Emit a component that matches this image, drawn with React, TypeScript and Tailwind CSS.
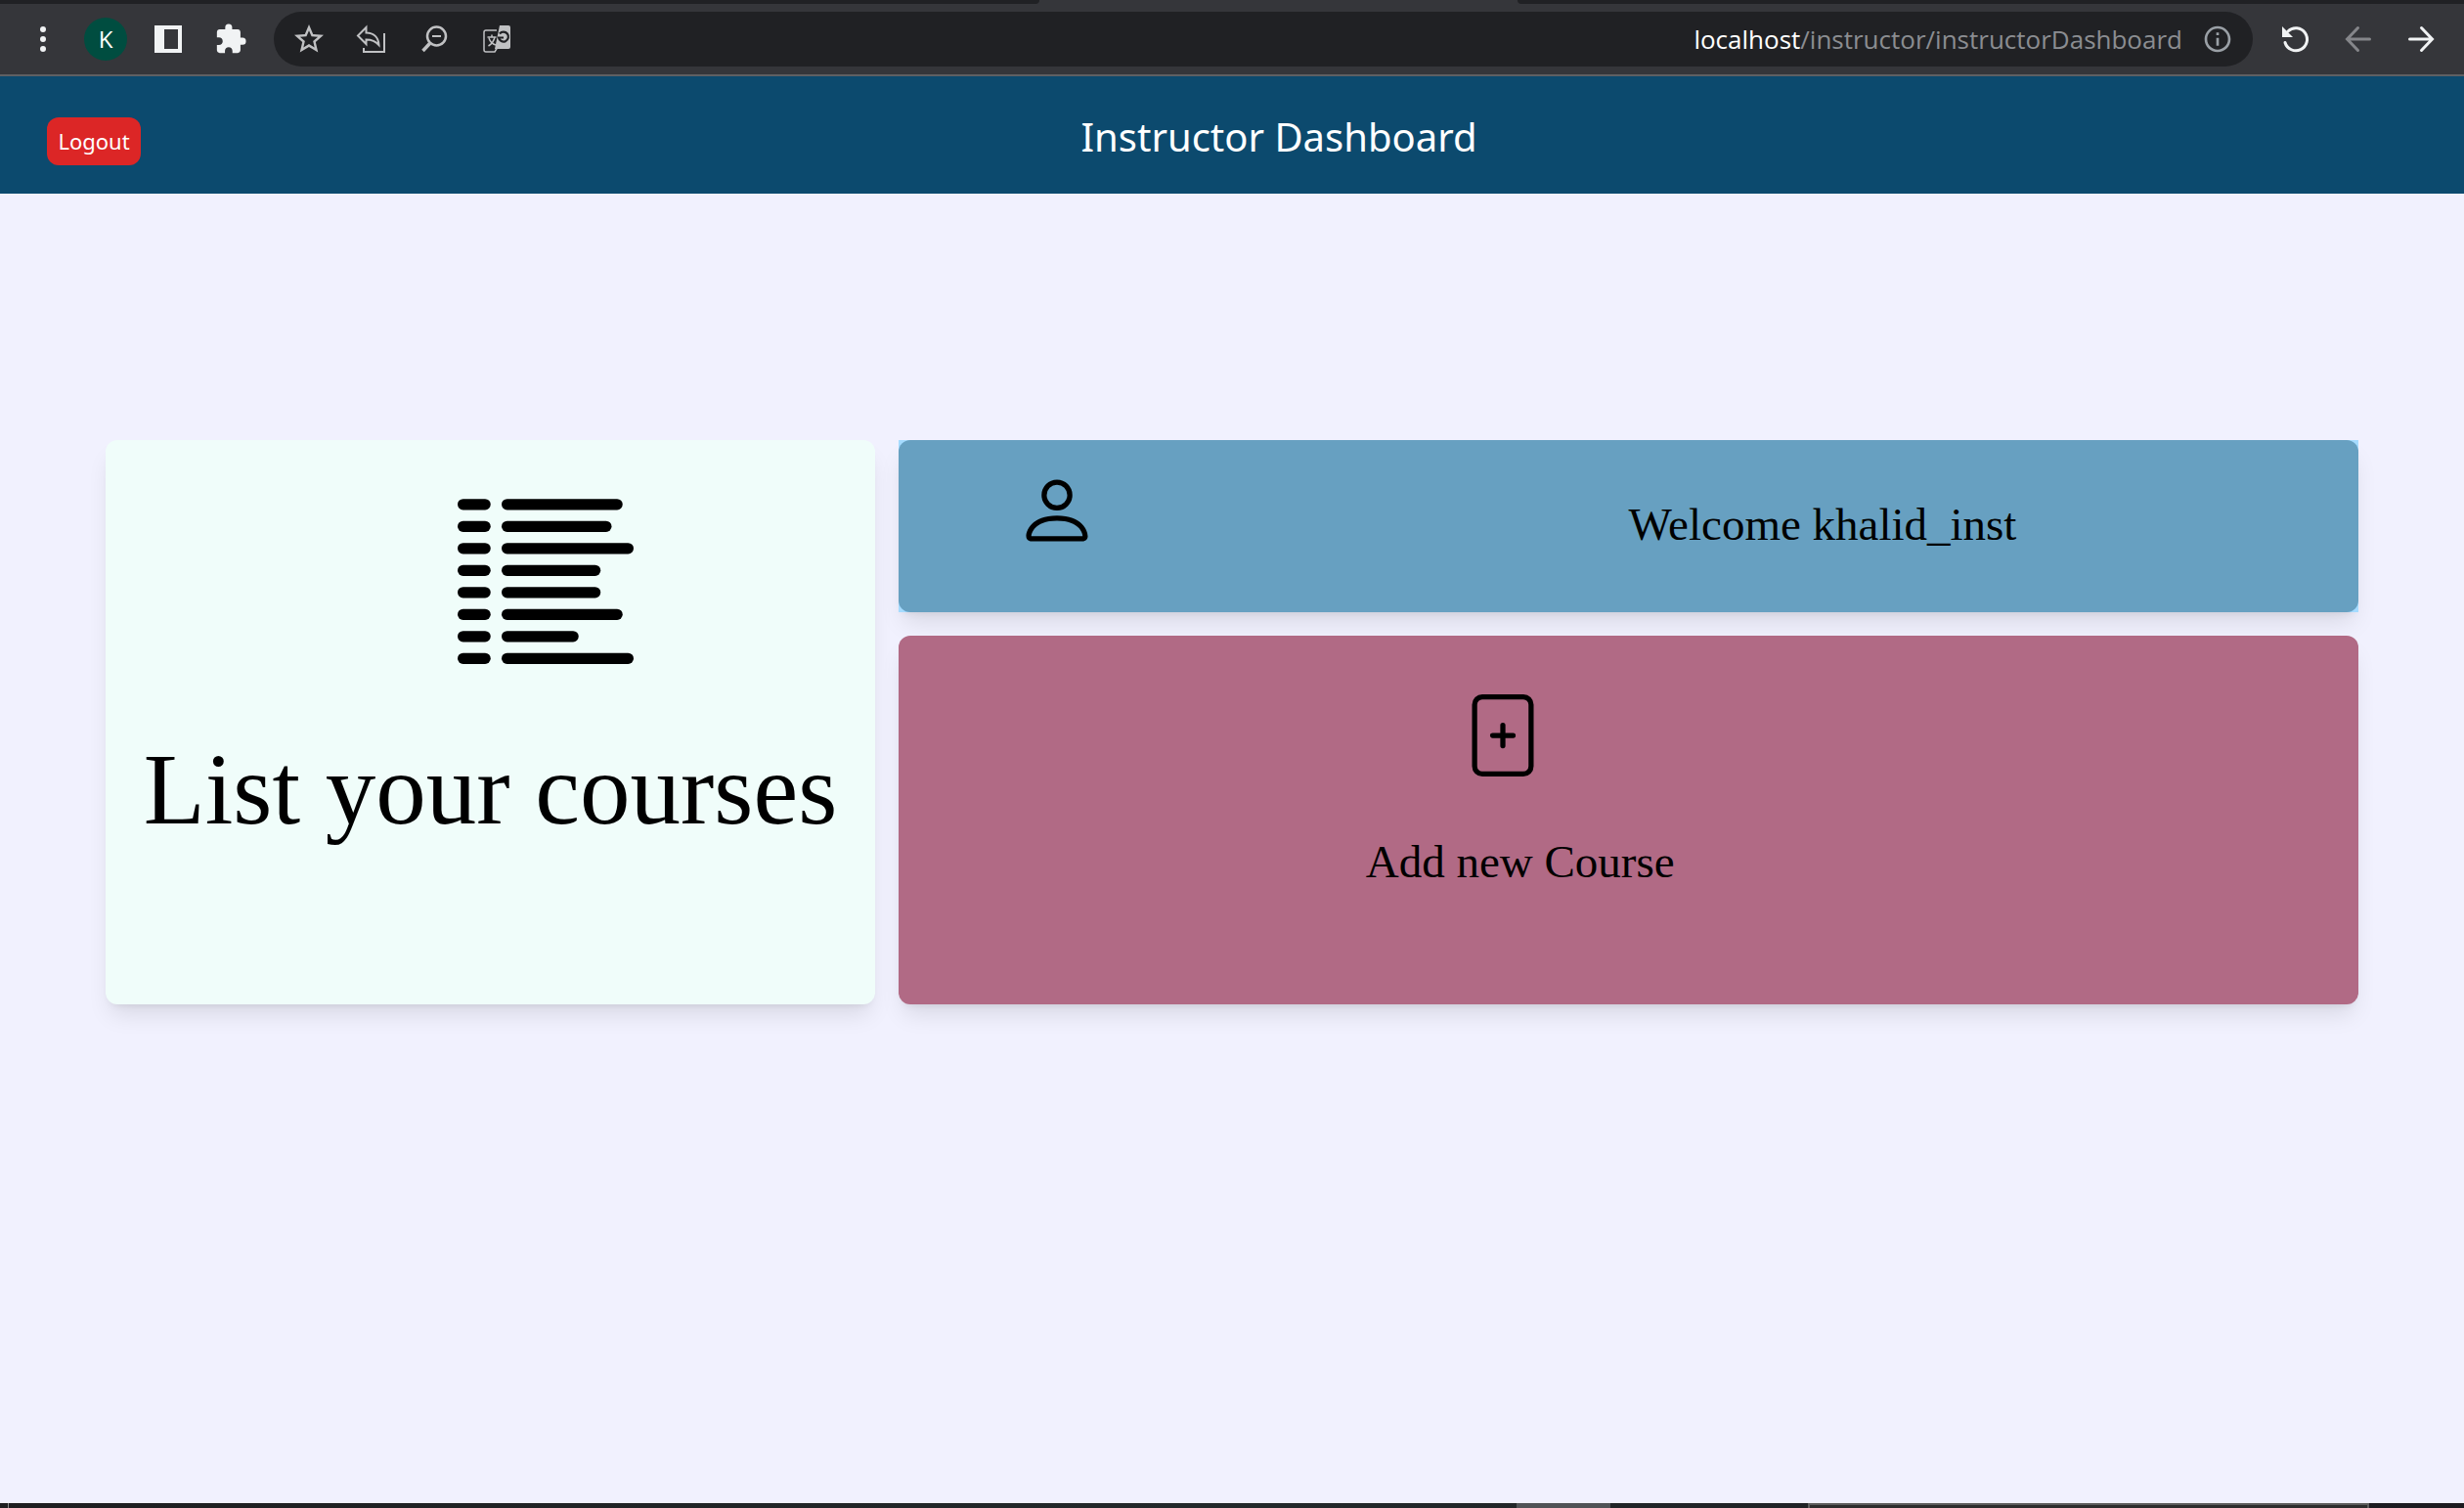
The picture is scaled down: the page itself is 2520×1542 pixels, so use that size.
import type { ReactNode } from "react";
import { BsFilePlus, BsPerson } from "react-icons/bs";
import { MdExtension, MdInfoOutline, MdStarOutline } from "react-icons/md";

const LIST_BARS = [15, 14, 16, 13, 13, 15, 11, 16];

function ListIcon() {
  return (
    <svg viewBox="0 0 16 15" className="h-[169px] w-[180px]" aria-hidden="true">
      {LIST_BARS.map((end, i) => (
        <g key={i}>
          <rect x="0" y={i * 2} width="3" height="1" rx="0.5" />
          <rect x="4" y={i * 2} width={end - 4} height="1" rx="0.5" />
        </g>
      ))}
    </svg>
  );
}

function IconButton({ label, children }: { label: string; children: ReactNode }) {
  return (
    <button type="button" aria-label={label} className="flex h-11 w-11 items-center justify-center rounded-full">
      {children}
    </button>
  );
}

function BrowserBar() {
  return (
    <div className="bg-[#35363a]">
      <div className="flex h-1 justify-between">
        <div className="w-[42.2%] rounded-br-lg bg-[#202124]" />
        <div className="w-[38.4%] rounded-bl-lg bg-[#202124]" />
      </div>
      <div className="flex h-[74px] items-center gap-5 border-b-2 border-[#5f6063] px-[22px] text-[#f1f3f4]">
        <IconButton label="Menu">
          <svg viewBox="0 0 36 36" className="size-9" fill="currentColor">
            <circle cx="18" cy="8" r="3" />
            <circle cx="18" cy="18" r="3" />
            <circle cx="18" cy="28" r="3" />
          </svg>
        </IconButton>
        <button type="button" aria-label="Profile" className="flex size-11 items-center justify-center rounded-full bg-[#004d40] font-['Open_Sans',sans-serif] text-2xl text-white">
          K
        </button>
        <IconButton label="Side panel">
          <svg viewBox="0 0 28 28" className="size-7" fill="currentColor">
            <path fillRule="evenodd" d="M0 0h28v28H0zM10 4v20h14V4z" />
          </svg>
        </IconButton>
        <IconButton label="Extensions">
          <MdExtension className="size-[34px]" />
        </IconButton>
        <div className="ml-[2px] flex h-14 flex-1 items-center rounded-full bg-[#202124] pl-[14px] pr-5 text-[#c0c1c3]">
          <div className="flex flex-1 gap-5">
            <IconButton label="Bookmark">
              <MdStarOutline className="size-9" />
            </IconButton>
            <IconButton label="Share">
              <svg viewBox="0 0 32 32" className="size-8" fill="none" stroke="currentColor" strokeWidth="2">
                <path d="M10.500 4v5.500C18 9.500 23 14 23.500 22C20 18 16 16.500 10.500 16.500V21L2 12.500z" />
                <path d="M29 10v19H8v-4" />
              </svg>
            </IconButton>
            <IconButton label="Zoom">
              <svg viewBox="0 0 32 32" className="size-8" fill="none" stroke="currentColor" strokeWidth="2.500">
                <circle cx="18.500" cy="13" r="9.500" />
                <path d="M14 13h9" strokeWidth="2" />
                <path d="M11.500 20.500L4.500 28" strokeWidth="3.500" />
              </svg>
            </IconButton>
            <IconButton label="Translate">
              <svg viewBox="0 0 32 32" className="size-8" fill="none" stroke="currentColor" strokeWidth="1.500">
                <path d="M16 7H5a2 2 0 0 0-2 2v18a2 2 0 0 0 2 2h9l3-5" />
                <path d="M6.500 14h9M11 11.500V14M14 14c-1 4-3 7-6.500 9M8 15c1 3 3.500 6 7 7" />
                <path fill="currentColor" stroke="none" d="M19 2h9a2 2 0 0 1 2 2v20a2 2 0 0 1-2 2H14z" />
                <path stroke="#202124" strokeWidth="2.200" d="M19 10.500A5 5 0 1 1 18 14.500h5" />
              </svg>
            </IconButton>
          </div>
          <p className="mr-5 font-['Open_Sans',sans-serif] text-[26px] leading-9 text-[#8b8d91]">
            <span className="text-white">localhost</span>/instructor/instructorDashboard
          </p>
          <MdInfoOutline className="size-8 text-[#9aa0a6]" />
        </div>
        <div className="ml-[2px] flex gap-5">
          <IconButton label="Reload">
            <svg viewBox="0 0 32 32" className="size-8" fill="none" stroke="currentColor" strokeWidth="3" strokeLinecap="round">
              <path d="M8 8a11.500 11.500 0 1 1-3 11.500" />
              <path fill="currentColor" stroke="none" d="M2 3v11h11z" />
            </svg>
          </IconButton>
          <IconButton label="Forward">
            <svg viewBox="0 0 32 32" className="size-8 text-[#85868a]" fill="none" stroke="currentColor" strokeWidth="3" strokeLinecap="round">
              <path d="M27.500 16H5M15.500 4.500L4.500 16l11 11.500" />
            </svg>
          </IconButton>
          <IconButton label="Back">
            <svg viewBox="0 0 32 32" className="size-8" fill="none" stroke="currentColor" strokeWidth="3" strokeLinecap="round">
              <path d="M4.500 16H27M16.500 4.500l11 11.500-11 11.500" />
            </svg>
          </IconButton>
        </div>
      </div>
    </div>
  );
}

function Taskbar() {
  return (
    <div className="flex h-[5px] bg-linear-to-r from-[#1e1e20] via-[#23292b] to-[#1c1b20]">
      <div className="ml-2 w-px bg-[#8a8a8a]" />
      <div className="ml-[61.2%] w-[3.8%] bg-[#505356]" />
      <div className="ml-[8%] w-[22.8%] border-x-2 border-t-2 border-[#5d5d5d] bg-[#2d2d2d]" />
    </div>
  );
}

export default function App() {
  return (
    <div className="flex min-h-screen flex-col bg-[#f1f1fe] text-black">
      <BrowserBar />
      <header className="flex h-[120px] items-center bg-[#0c4a6e] px-12 font-['Noto_Sans',sans-serif] text-white">
        <button type="button" className="mt-3 h-[49px] w-24 rounded-xl bg-[#dc2626] text-[22px]">
          Logout
        </button>
        <h1 className="flex-1 pt-1 text-center text-[40px] leading-[60px]">Instructor Dashboard</h1>
      </header>
      <main className="grid flex-1 grid-cols-[787fr_1493fr] grid-rows-[176px_377px] content-start gap-6 px-[108px] pt-[252px] font-['Liberation_Serif',serif]">
        <a href="#courses" className="row-span-2 rounded-xl bg-[#f0fdfa] pt-[60px] shadow-[0_15px_23px_-5px_rgba(0,0,0,0.1),0_6px_9px_-6px_rgba(0,0,0,0.1)]">
          <div className="pl-[45.7%]">
            <ListIcon />
          </div>
          <h2 className="mt-[68px] text-center text-[103px] leading-[120px]">List your courses</h2>
        </a>
        <section className="bg-[#a5dbff] shadow-[0_15px_23px_-5px_rgba(0,0,0,0.1),0_6px_9px_-6px_rgba(0,0,0,0.1)]">
          <div className="grid h-full grid-cols-2 rounded-xl bg-[#67a0c1]">
            <BsPerson className="ml-[120px] mt-[30px] size-[84px]" />
            <p className="self-center pb-1 text-[47px] leading-[54px]">Welcome khalid_inst</p>
          </div>
        </section>
        <a href="#new" className="rounded-xl bg-[#b16a85] pt-[60px] shadow-[0_15px_23px_-5px_rgba(0,0,0,0.1),0_6px_9px_-6px_rgba(0,0,0,0.1)]">
          <BsFilePlus className="ml-[38.6%] size-[84px]" />
          <h2 className="ml-[32%] mt-[60px] text-[47px] leading-[54px]">Add new Course</h2>
        </a>
      </main>
      <Taskbar />
    </div>
  );
}
